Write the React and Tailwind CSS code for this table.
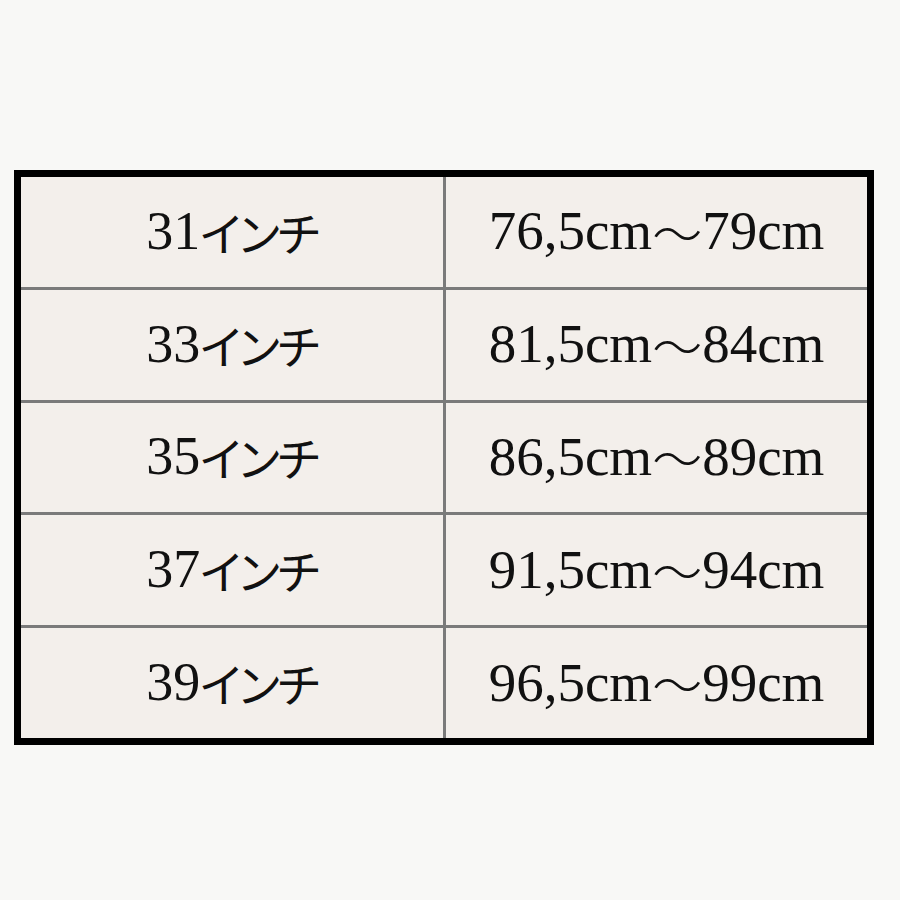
import React from "react";

const rows = [
  ["31", "76,5cm", "79cm"],
  ["33", "81,5cm", "84cm"],
  ["35", "86,5cm", "89cm"],
  ["37", "91,5cm", "94cm"],
  ["39", "96,5cm", "99cm"],
];

export default function App() {
  return (
    <div className="w-[900px] h-[900px] bg-[#f8f8f6] pt-[170px] pl-[14px]">
      <div className="w-[860px] h-[575px] border-[7px] border-black bg-[#7a7a7a] grid grid-cols-[422px_421px] grid-rows-5 gap-[3px]">
        {rows.map(([n, a, b]) => (
          <React.Fragment key={n}>
            <div className="bg-[#f3efeb] flex items-center justify-center text-[#111] pb-[2px]">
              <span className="text-[54px] leading-none font-['Liberation_Serif',serif]">{n}</span>
              <span className="text-[46px] leading-none font-normal tracking-[-2px] font-['Noto_Sans_CJK_JP',sans-serif] [font-feature-settings:'palt']">
                インチ
              </span>
            </div>
            <div className="bg-[#f3efeb] flex items-center justify-center text-[#111] pb-[2px]">
              <span className="text-[55px] leading-none font-['Liberation_Serif',serif]">{a}</span>
              <span className="text-[50px] leading-none font-light font-['Noto_Sans_CJK_JP',sans-serif]">～</span>
              <span className="text-[55px] leading-none font-['Liberation_Serif',serif]">{b}</span>
            </div>
          </React.Fragment>
        ))}
      </div>
    </div>
  );
}
